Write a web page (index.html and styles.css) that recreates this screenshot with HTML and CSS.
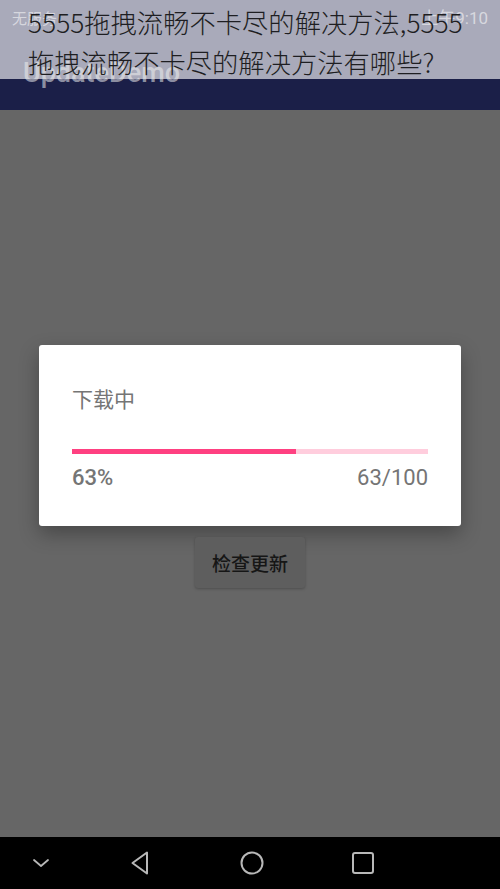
FILE: index.html
```html
<!DOCTYPE html>
<html lang="zh">
<head>
<meta charset="utf-8">
<link rel="stylesheet" href="styles.css">
</head>
<body>
<div class="screen">
  <div class="top">
    <span class="status-left">无服务</span>
    <span class="status-right">上午9:10</span>
  </div>
  <div class="toolbar"></div>
  <div class="app-title">UpdateDemo</div>
  <div class="headline">5555拖拽流畅不卡尽的解决方法,5555<br>拖拽流畅不卡尽的解决方法有哪些?</div>
  <main class="content">
    <div class="dialog">
      <div class="dialog-title">下载中</div>
      <div class="progress"><div class="progress-fill" style="width:63%"></div></div>
      <div class="progress-info">
        <span class="percent">63%</span>
        <span class="count">63/100</span>
      </div>
    </div>
    <div class="check-btn">检查更新</div>
  </main>
  <nav class="navbar">
    <svg class="nav-icon" width="20" height="12" viewBox="0 0 20 12"><polyline points="3,3 10,9 17,3" fill="none" stroke="#b8b8b8" stroke-width="1.8" stroke-linejoin="round" stroke-linecap="round"/></svg>
    <svg class="nav-icon" width="24" height="26" viewBox="0 0 24 26"><polygon points="18,2.5 18,23.5 3.5,13" fill="none" stroke="#b8b8b8" stroke-width="2" stroke-linejoin="round"/></svg>
    <svg class="nav-icon" width="26" height="26" viewBox="0 0 26 26"><circle cx="13" cy="13" r="10.5" fill="none" stroke="#b8b8b8" stroke-width="2"/></svg>
    <svg class="nav-icon" width="24" height="24" viewBox="0 0 24 24"><rect x="2" y="2" width="20" height="20" rx="2" fill="none" stroke="#b8b8b8" stroke-width="2"/></svg>
  </nav>
</div>
</body>
</html>
```
FILE: styles.css
```css
html, body {
  margin: 0;
  padding: 0;
}
body {
  width: 500px;
  height: 889px;
  overflow: hidden;
  font-family: Roboto, "Noto Sans CJK SC", sans-serif;
}
.screen {
  position: relative;
  width: 500px;
  height: 889px;
  display: flex;
  flex-direction: column;
  background: #666666;
}
.top {
  height: 79px;
  background: #a9aaba;
  display: flex;
  justify-content: space-between;
  align-items: flex-start;
  padding: 0 12px;
  box-sizing: border-box;
}
.status-left {
  font-family: "Noto Sans CJK SC", Roboto, sans-serif;
  font-size: 15px;
  line-height: 16px;
  margin-top: 10px;
  color: rgba(255, 255, 255, 0.55);
}
.status-right {
  font-family: Roboto, "Noto Sans CJK SC", sans-serif;
  font-size: 17px;
  line-height: 16px;
  margin-top: 10px;
  color: rgba(255, 255, 255, 0.55);
}
.toolbar {
  height: 31px;
  background: #1b1f48;
}
.app-title {
  position: absolute;
  left: 23px;
  top: 55px;
  font-family: Roboto, sans-serif;
  font-weight: 500;
  font-size: 27px;
  line-height: 36px;
  color: rgba(240, 240, 240, 0.55);
}
.headline {
  position: absolute;
  left: 28px;
  top: 2px;
  font-family: "Noto Sans CJK SC", sans-serif;
  font-weight: 300;
  font-size: 26.3px;
  line-height: 40px;
  color: #1e1e22;
  white-space: nowrap;
}
.content {
  flex: 1;
  display: flex;
  flex-direction: column;
  align-items: center;
  padding-top: 235px;
  box-sizing: border-box;
}
.dialog {
  width: 422px;
  height: 181px;
  background: #ffffff;
  border-radius: 3px;
  box-shadow: 0 8px 20px rgba(0, 0, 0, 0.3);
  padding: 38px 33px 0;
  box-sizing: border-box;
}
.dialog-title {
  font-family: "Noto Sans CJK SC", sans-serif;
  font-size: 21px;
  line-height: 30px;
  color: #757575;
}
.progress {
  margin-top: 36px;
  height: 5px;
  background: #ffcddd;
}
.progress-fill {
  height: 100%;
  background: #ff4081;
}
.progress-info {
  display: flex;
  justify-content: space-between;
  margin-top: 11px;
  font-family: Roboto, sans-serif;
  font-size: 22px;
  line-height: 26px;
  color: #757575;
}
.percent {
  font-weight: 500;
}
.check-btn {
  margin-top: 11px;
  width: 110px;
  height: 51px;
  background: #5e5e5e;
  border-radius: 3px;
  box-shadow: 0 1px 3px rgba(0, 0, 0, 0.25);
  display: flex;
  align-items: center;
  justify-content: center;
  font-family: "Noto Sans CJK SC", sans-serif;
  font-weight: 500;
  font-size: 19px;
  color: #161616;
}
.navbar {
  height: 52px;
  background: #000000;
  display: flex;
  align-items: center;
  padding-left: 31px;
}
.nav-icon:nth-child(2) { margin-left: 78px; }
.nav-icon:nth-child(3) { margin-left: 86px; }
.nav-icon:nth-child(4) { margin-left: 86px; }
```
